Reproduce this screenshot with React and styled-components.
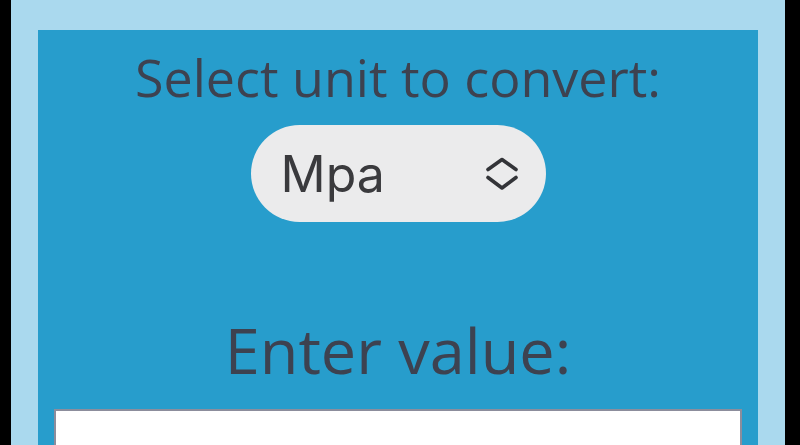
import styled, { createGlobalStyle } from "styled-components";
import { useState } from "react";

const GlobalStyle = createGlobalStyle`
  html, body {
    margin: 0;
    padding: 0;
    background: #000;
    height: 100%;
    overflow: hidden;
  }
  #root {
    height: 100%;
  }
`;

const UpDownIcon = () => (
  <svg width="34" height="34" viewBox="0 0 34 34" fill="none">
    <polyline points="3,12.5 17,2.5 31,12.5" stroke="#333438" strokeWidth="3.6" strokeLinecap="round" strokeLinejoin="round" />
    <polyline points="3,20.5 17,31 31,20.5" stroke="#333438" strokeWidth="3.6" strokeLinecap="round" strokeLinejoin="round" />
  </svg>
);

const App = () => {
  const [unit, setUnit] = useState("Mpa");
  const [value, setValue] = useState("");

  return (
    <Page>
      <GlobalStyle />
      <Panel>
        <Card>
          <Label>Select unit to convert:</Label>
          <SelectWrap>
            <UnitSelect value={unit} onChange={e => setUnit(e.target.value)}>
              <option value={"Mpa"}>Mpa</option>
              <option value={"Kpa"}>Kpa</option>
              <option value={"Psi"}>Psi</option>
              <option value={"Bar"}>Bar</option>
            </UnitSelect>
            <IconSlot>
              <UpDownIcon />
            </IconSlot>
          </SelectWrap>
          <Label big>Enter value:</Label>
          <ValueInput type={"number"} value={value} onChange={e => setValue(e.target.value)} />
        </Card>
      </Panel>
    </Page>
  );
}

const Page = styled.div`
  height: 100%;
  padding: 0 15px 0 11px;
  box-sizing: border-box;
  background: #000;
  display: flex;
`;

const Panel = styled.div`
  flex: 1;
  background: #aad9ee;
  padding: 30px 27px 0 27px;
  display: flex;
`;

const Card = styled.div`
  flex: 1;
  background: #279dcc;
  padding: 0 16px;
  display: flex;
  flex-direction: column;
  align-items: center;
  overflow: hidden;
`;

const Label = styled.div`
  flex-shrink: 0;
  font-family: "Open Sans", sans-serif;
  font-size: ${props => props.big ? "63px" : "52px"};
  line-height: 1;
  color: #3d4250;
  margin-top: ${props => props.big ? "96px" : "21px"};
  margin-bottom: ${props => props.big ? "28px" : "22px"};
  white-space: nowrap;
`;

const SelectWrap = styled.div`
  flex-shrink: 0;
  position: relative;
  width: 295px;
  height: 97px;
  border-radius: 49px;
  background: #ebebec;
`;

const UnitSelect = styled.select`
  appearance: none;
  -webkit-appearance: none;
  width: 100%;
  height: 100%;
  border: none;
  outline: none;
  background: transparent;
  padding: 0 0 0 30px;
  font-family: "Inter", sans-serif;
  font-size: 50px;
  color: #3a3a3d;
`;

const IconSlot = styled.div`
  position: absolute;
  right: 27px;
  top: 32px;
  pointer-events: none;
  display: flex;
`;

const ValueInput = styled.input`
  flex-shrink: 0;
  align-self: stretch;
  height: 80px;
  border: 2px solid #8c8d9c;
  background: #fff;
  outline: none;
  padding: 0 14px;
  font-size: 40px;
`;

export default App;
